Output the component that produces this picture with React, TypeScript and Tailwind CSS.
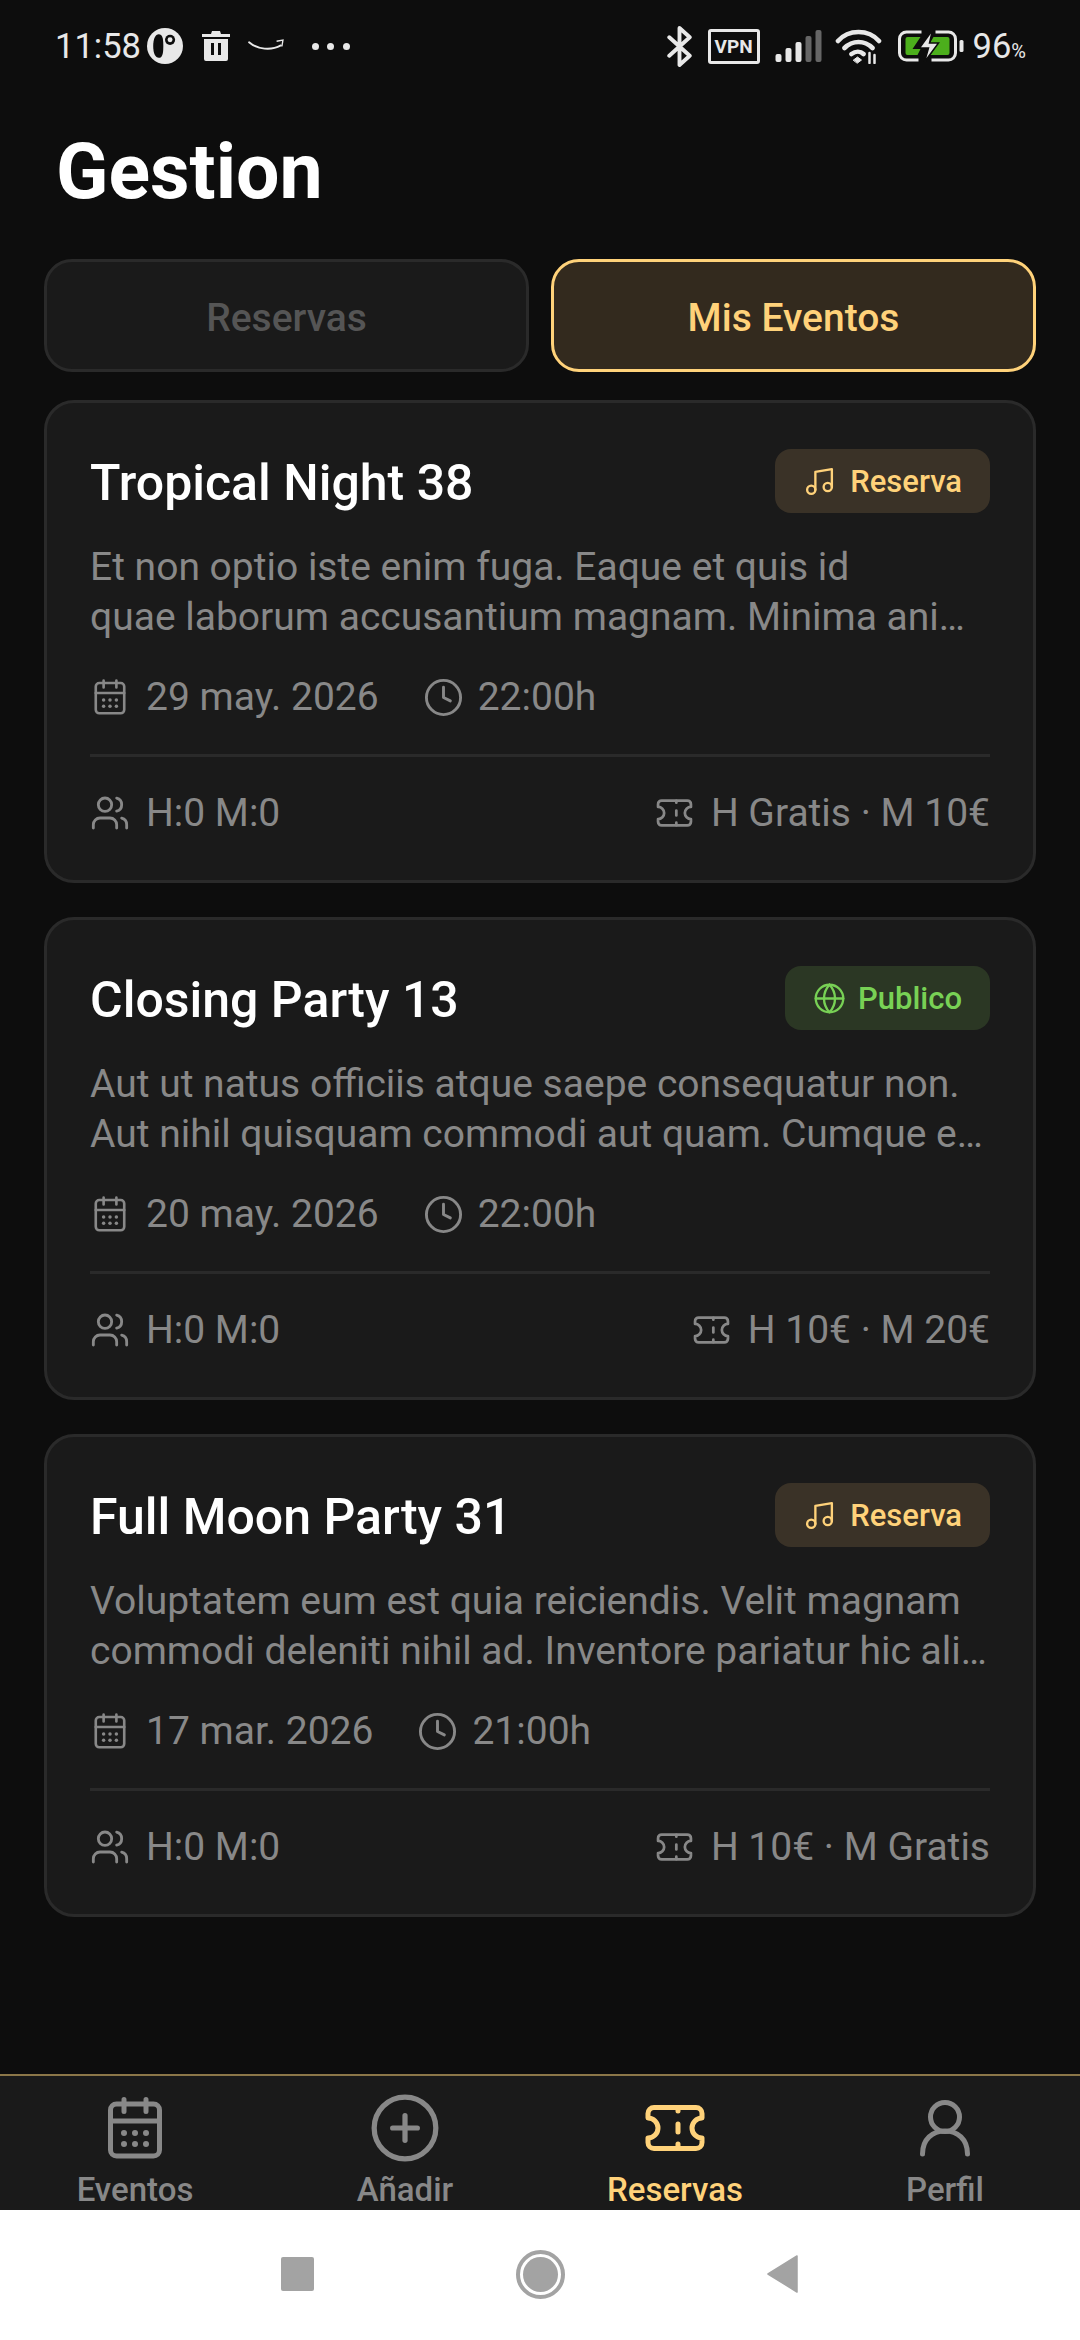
import { Clock, Globe, Music, Users, CirclePlus } from "lucide-react";

type EventItem = {
  title: string;
  line1: string;
  line2: string;
  date: string;
  time: string;
  price: string;
  kind: "reserva" | "publico";
};

const events: EventItem[] = [
  {
    title: "Tropical Night 38",
    line1: "Et non optio iste enim fuga. Eaque et quis id",
    line2: "quae laborum accusantium magnam. Minima ani…",
    date: "29 may. 2026",
    time: "22:00h",
    price: "H Gratis · M 10€",
    kind: "reserva",
  },
  {
    title: "Closing Party 13",
    line1: "Aut ut natus officiis atque saepe consequatur non.",
    line2: "Aut nihil quisquam commodi aut quam. Cumque e…",
    date: "20 may. 2026",
    time: "22:00h",
    price: "H 10€ · M 20€",
    kind: "publico",
  },
  {
    title: "Full Moon Party 31",
    line1: "Voluptatem eum est quia reiciendis. Velit magnam",
    line2: "commodi deleniti nihil ad. Inventore pariatur hic ali…",
    date: "17 mar. 2026",
    time: "21:00h",
    price: "H 10€ · M Gratis",
    kind: "reserva",
  },
];

function CalendarIcon({ className, sw }: { className: string; sw: number }) {
  return (
    <svg viewBox="0 0 54 62" fill="none" stroke="currentColor" strokeWidth={sw} strokeLinecap="round" className={className}>
      <rect x="2.5" y="7" width="49" height="52" rx="6" />
      <path d="M2.5 24h49M16 2.5v12M38 2.5v12" />
      <g fill="currentColor" stroke="none">
        <circle cx="16" cy="36" r="3" />
        <circle cx="27" cy="36" r="3" />
        <circle cx="38" cy="36" r="3" />
        <circle cx="16" cy="47" r="3" />
        <circle cx="27" cy="47" r="3" />
        <circle cx="38" cy="47" r="3" />
      </g>
    </svg>
  );
}

function TicketIcon({ className, sw }: { className: string; sw: number }) {
  return (
    <svg viewBox="0 0 60 46" fill="none" stroke="currentColor" strokeWidth={sw} strokeLinejoin="round" strokeLinecap="round" className={className}>
      <path d="M9 2.5h42a6 6 0 0 1 6 6v4.500a10 10 0 0 0 0 20v4.500a6 6 0 0 1-6 6H9a6 6 0 0 1-6-6v-4.500a10 10 0 0 0 0-20V8.500a6 6 0 0 1 6-6z" />
      <path d="M33 3v3M33 19v8M33 39v4" />
    </svg>
  );
}

function PersonIcon() {
  return (
    <svg viewBox="0 0 50 58" fill="none" stroke="#888888" strokeWidth="5" strokeLinecap="round" className="w-[50px] h-[58px]">
      <circle cx="25" cy="18" r="14.5" />
      <path d="M2.5 55c0-15 10-23 22.500-23s22.500 8 22.500 23" />
    </svg>
  );
}

function StatusBar() {
  return (
    <div className="h-[92px] shrink-0 flex items-center justify-between pl-[55px] pr-[54px] text-[#e8e8e8]">
      <div className="flex items-center">
        <span className="text-[34.500px] leading-none font-[450]">11:58</span>
        <svg viewBox="0 0 32 32" className="w-[36px] h-[36px] ml-[6px]">
          <circle cx="16" cy="16" r="16" fill="#e8e8e8" />
          <path d="M10.500 5.500c-3 0-5 4-5 10.500s2 10.500 5 10.500 4-3 4-10.500-1-10.500-4-10.500z" fill="#0d0d0d" />
          <circle cx="20.500" cy="10.500" r="4.500" fill="#0d0d0d" />
          <circle cx="20.500" cy="10.500" r="2.200" fill="#e8e8e8" />
        </svg>
        <svg viewBox="0 0 28 30" className="w-[28px] h-[32px] ml-[19px]">
          <path d="M10 0h8l1 3h9v3H0V3h9zM2 8h24v20a2 2 0 0 1-2 2H4a2 2 0 0 1-2-2z" fill="#e8e8e8" />
          <path d="M9 12h3v12H9zM16 12h3v12h-3z" fill="#0d0d0d" />
        </svg>
        <svg viewBox="0 0 34 14" fill="none" stroke="#e8e8e8" className="w-[36px] h-[15px] ml-[18px]">
          <path d="M1 3c8 7 21 8 30 3" strokeWidth="1.800" strokeLinecap="round" />
          <path d="M27 2l6-1-1 6" strokeWidth="1.300" />
        </svg>
        <div className="flex gap-[8.500px] ml-[28px]">
          <span className="w-[7px] h-[7px] rounded-full bg-[#e8e8e8]" />
          <span className="w-[7px] h-[7px] rounded-full bg-[#e8e8e8]" />
          <span className="w-[7px] h-[7px] rounded-full bg-[#e8e8e8]" />
        </div>
      </div>
      <div className="flex items-center">
        <svg viewBox="0 0 24 40" fill="none" stroke="#e8e8e8" strokeWidth="3.800" strokeLinejoin="round" strokeLinecap="round" className="w-[27px] h-[41px]">
          <path d="M2 11l20 18-10 9V2l10 9L2 29" />
        </svg>
        <div className="w-[52px] h-[35px] ml-[15px] rounded-[3px] border-[3px] border-[#e8e8e8] flex items-center justify-center text-[19px] font-bold leading-none">VPN</div>
        <svg viewBox="0 0 46 32" className="w-[47px] h-[32px] ml-[15px]" fill="#e8e8e8">
          <rect x="0" y="24" width="6" height="8" rx="2" />
          <rect x="10" y="18" width="6" height="14" rx="2" />
          <rect x="20" y="12" width="6" height="20" rx="2" />
          <rect x="30" y="6" width="6" height="26" rx="2" fill="#666666" />
          <rect x="40" y="0" width="6" height="32" rx="2" fill="#666666" />
        </svg>
        <svg viewBox="0 0 46 36" fill="none" stroke="#e8e8e8" strokeWidth="4.600" strokeLinecap="round" className="w-[47px] h-[36px] ml-[13px]">
          <path d="M2.500 13C13 1 33 1 43.500 13M9 20c8-8 20-8 28 0M16 26c4-3 9-3 12 0" />
          <path d="M18 32l4-3 4 3-4 3z" fill="#e8e8e8" strokeWidth="1" />
          <path d="M34 25v10M39 27v8" strokeWidth="2.500" />
        </svg>
        <svg viewBox="0 0 66 32" className="w-[67px] h-[32px] ml-[15px]" fill="none">
          <path d="M24 2H9a7 7 0 0 0-7 7v14a7 7 0 0 0 7 7h12M38 2h13a7 7 0 0 1 7 7v14a7 7 0 0 1-7 7H34" stroke="#e8e8e8" strokeWidth="3" />
          <path d="M10 7h13l-8 12h8l-3 6H10a2 2 0 0 1-2-2V9a2 2 0 0 1 2-2zM36 7h14a2 2 0 0 1 2 2v14a2 2 0 0 1-2 2H33l7-11h-8z" fill="#4caf1c" />
          <path d="M35 0L22 18h9l-4 14 14-19h-9z" fill="#e8e8e8" stroke="#0d0d0d" strokeWidth="1.500" />
          <rect x="62" y="10" width="4" height="12" rx="1.500" fill="#e8e8e8" />
        </svg>
        <span className="text-[34.500px] leading-none ml-[9px]">96</span>
        <span className="text-[20px] leading-none mt-[10px]">%</span>
      </div>
    </div>
  );
}

function Badge({ kind }: { kind: EventItem["kind"] }) {
  if (kind === "publico") {
    return (
      <div className="h-[64px] px-[28px] flex items-center gap-[12px] rounded-[16px] bg-[#2b3724] text-[#78d155]">
        <Globe size={33} strokeWidth={1.700} />
        <span className="text-[31px] leading-none font-medium">Publico</span>
      </div>
    );
  }
  return (
    <div className="h-[64px] px-[28px] flex items-center gap-[14px] rounded-[16px] bg-[#3a3227] text-[#ffd27a]">
      <Music size={33} strokeWidth={1.700} />
      <span className="text-[31px] leading-none font-medium">Reserva</span>
    </div>
  );
}

function EventCard({ ev }: { ev: EventItem }) {
  return (
    <div className="h-[483px] rounded-[30px] border-[3px] border-[#2a2a2a] bg-[#1a1a1a] px-[43px] pt-[46px] flex flex-col">
      <div className="h-[64px] flex items-center justify-between">
        <h2 className="pt-[4px] text-[50px] leading-none font-medium text-white">{ev.title}</h2>
        <Badge kind={ev.kind} />
      </div>
      <p className="mt-[29px] text-[39px] leading-[50px] pb-[4px] text-[#888888] whitespace-nowrap">
        {ev.line1}
        <br />
        {ev.line2}
      </p>
      <div className="mt-[22px] h-[58px] flex items-center text-[39px] leading-none text-[#888888]">
        <CalendarIcon className="w-[32px] h-[36px] ml-[4px]" sw={4.500} />
        <span className="ml-[20px]">{ev.date}</span>
        <Clock size={41} strokeWidth={1.700} className="ml-[44px]" />
        <span className="ml-[14px]">{ev.time}</span>
      </div>
      <div className="mt-[28px] h-[3px] bg-[#2a2a2a]" />
      <div className="mt-[36px] flex items-center justify-between text-[39px] leading-none text-[#888888]">
        <div className="flex items-center">
          <Users size={40} strokeWidth={1.700} />
          <span className="ml-[16px]">H:0 M:0</span>
        </div>
        <div className="flex items-center">
          <TicketIcon className="w-[37px] h-[28px]" sw={4.500} />
          <span className="ml-[18px]">{ev.price}</span>
        </div>
      </div>
    </div>
  );
}

function NavItem({ label, active, icon }: { label: string; active?: boolean; icon: React.ReactNode }) {
  return (
    <div className={`flex-1 flex flex-col items-center ${active ? "text-[#ffd27a]" : "text-[#888888]"}`}>
      <div className="h-[64px] shrink-0 flex items-center justify-center">{icon}</div>
      <span className="mt-[11px] text-[33px] leading-[38px] font-medium">{label}</span>
    </div>
  );
}

export default function App() {
  return (
    <div className="w-[1080px] h-[2340px] flex flex-col bg-[#0d0d0d] font-['Roboto',sans-serif] overflow-hidden">
      <StatusBar />
      <h1 className="mt-[38px] ml-[56px] text-[77px] leading-[84px] font-bold text-white">Gestion</h1>
      <div className="mt-[45px] mx-[44px] flex gap-[22px]">
        <button className="flex-1 h-[113px] pt-[5px] rounded-[28px] border-[3px] border-[#2a2a2a] bg-[#1a1a1a] text-[39px] font-medium text-[#555555]">
          Reservas
        </button>
        <button className="flex-1 h-[113px] pt-[5px] rounded-[28px] border-[3px] border-[#ffd27a] bg-[#332a1e] text-[39px] font-medium text-[#ffd27a]">
          Mis Eventos
        </button>
      </div>
      <div className="mt-[28px] mx-[44px] flex flex-col gap-[34px]">
        {events.map((ev) => (
          <EventCard key={ev.title} ev={ev} />
        ))}
      </div>
      <div className="flex-1" />
      <nav className="h-[136px] shrink-0 border-t-[2px] border-[#8b7648] bg-[#1a1a1a] flex pt-[20px] overflow-hidden">
        <NavItem label="Eventos" icon={<CalendarIcon className="w-[54px] h-[62px]" sw={5} />} />
        <NavItem label="Añadir" icon={<CirclePlus size={74} strokeWidth={1.700} />} />
        <NavItem label="Reservas" active icon={<TicketIcon className="w-[60px] h-[46px]" sw={5} />} />
        <NavItem label="Perfil" icon={<PersonIcon />} />
      </nav>
      <div className="h-[130px] shrink-0 bg-white flex items-center justify-center gap-[202px] pb-[2px]">
        <div className="w-[33px] h-[34px] rounded-[2px] bg-[#a3a3a3]" />
        <div className="w-[49px] h-[49px] rounded-full border-[4px] border-[#a3a3a3] p-[3px]">
          <div className="w-full h-full rounded-full bg-[#a3a3a3]" />
        </div>
        <svg viewBox="0 0 32 38" className="w-[32px] h-[38px]">
          <path d="M30 1L1 19l29 18z" fill="#a3a3a3" stroke="#a3a3a3" strokeWidth="1.500" strokeLinejoin="round" />
        </svg>
      </div>
    </div>
  );
}
